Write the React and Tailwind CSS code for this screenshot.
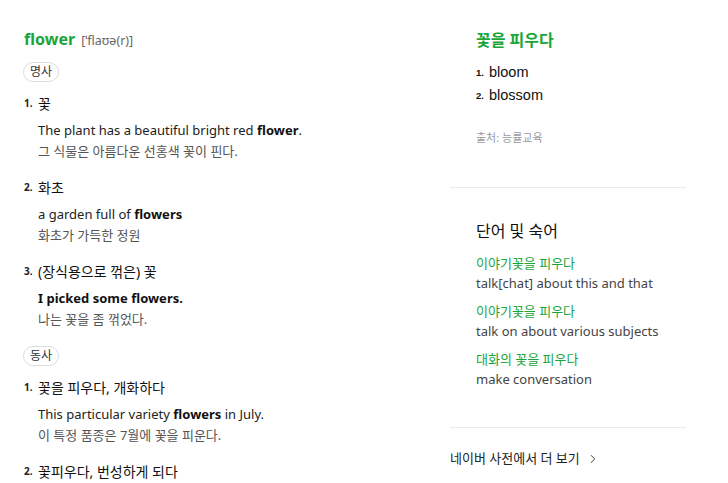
import { ChevronRight } from "lucide-react";

const GREEN = "text-[#1ba539]";

const senses = [
  {
    pos: "명사",
    items: [
      {
        meaning: "꽃",
        en: ["The plant has a beautiful bright red ", <b key="b">flower</b>, "."],
        ko: "그 식물은 아름다운 선홍색 꽃이 핀다.",
      },
      {
        meaning: "화초",
        en: ["a garden full of ", <b key="b">flowers</b>],
        ko: "화초가 가득한 정원",
      },
      {
        meaning: "(장식용으로 꺾은) 꽃",
        en: [<b key="b">I picked some flowers.</b>],
        ko: "나는 꽃을 좀 꺾었다.",
      },
    ],
  },
  {
    pos: "동사",
    items: [
      {
        meaning: "꽃을 피우다, 개화하다",
        en: ["This particular variety ", <b key="b">flowers</b>, " in July."],
        ko: "이 특정 품종은 7월에 꽃을 피운다.",
      },
      { meaning: "꽃피우다, 번성하게 되다" },
    ],
  },
];

const idioms = [
  { ko: "이야기꽃을 피우다", en: "talk[chat] about this and that" },
  { ko: "이야기꽃을 피우다", en: "talk on about various subjects" },
  { ko: "대화의 꽃을 피우다", en: "make conversation" },
];

const Pill = ({ children }) => (
  <div className="-ml-px flex h-5 w-9 items-center justify-center rounded-full border border-[#dcdde0] text-[12px] leading-none text-[#333]">
    {children}
  </div>
);

const Sense = ({ n, item, first }) => (
  <div className={first ? "mt-[11px]" : "mt-[15px]"}>
    <div className="flex h-5 items-center">
      <span className="w-[14px] text-[10px] font-bold text-[#222]">{n}.</span>
      <span className="text-[14px] text-[#111]">{item.meaning}</span>
    </div>
    {item.en && (
      <div className="mt-[7px] pl-[14px] text-[13px]">
        <div className="flex h-[21px] items-center whitespace-pre text-[#222] [&_b]:font-bold [&_b]:text-[#111]">
          {item.en}
        </div>
        <div className="flex h-[21px] items-center text-[#555]">{item.ko}</div>
      </div>
    )}
  </div>
);

export default function App() {
  return (
    <div className="flex h-[483px] w-[728px] overflow-hidden bg-white font-['Noto_Sans','Noto_Sans_CJK_KR',sans-serif]">
      <div className="w-[450px] shrink-0 pl-6 pt-[27px]">
        <div className="flex h-6 items-baseline gap-[6px]">
          <span className={`text-[16px] font-bold ${GREEN}`}>flower</span>
          <span className="text-[12.5px] text-[#666]">[ˈflaʊə(r)]</span>
        </div>
        {senses.map((s, si) => (
          <div key={s.pos} className={si === 0 ? "mt-[11px]" : "mt-4"}>
            <Pill>{s.pos}</Pill>
            {s.items.map((item, i) => (
              <Sense key={i} n={i + 1} item={item} first={i === 0} />
            ))}
          </div>
        ))}
      </div>

      <div className="w-[236px] shrink-0 pt-[28px]">
        <div className="px-[26px]">
          <div className={`text-[16px] font-semibold leading-6 ${GREEN}`}>꽃을 피우다</div>
          <ol className="mt-[9px] font-['Liberation_Sans','Noto_Sans_CJK_KR',sans-serif] text-[14.5px] leading-[23px] text-[#111]">
            <li className="flex items-center">
              <span className="w-[13px] text-[9.5px] font-bold">1.</span>bloom
            </li>
            <li className="flex items-center">
              <span className="w-[13px] text-[9.5px] font-bold">2.</span>blossom
            </li>
          </ol>
          <div className="mt-[23px] text-[11px] leading-4 text-[#999]">출처: 능률교육</div>
        </div>

        <div className="mt-[41px] border-t border-[#ebebeb]" />

        <div className="px-[26px] pt-[31px]">
          <div className="text-[16px] leading-6 text-[#111]">단어 및 숙어</div>
          <div className="mt-[10px]">
            {idioms.map((d, i) => (
              <div key={i} className={i ? "mt-2" : ""}>
                <div className={`text-[13px] leading-5 ${GREEN}`}>{d.ko}</div>
                <div className="text-[13px] leading-5 text-[#444]">{d.en}</div>
              </div>
            ))}
          </div>
        </div>

        <div className="mt-[38px] border-t border-[#ebebeb]" />

        <div className="mt-[21px] flex h-5 items-center text-[13px] text-[#222]">
          네이버 사전에서 더 보기
          <ChevronRight className="ml-[6px] h-[14px] w-[14px] text-[#222]" strokeWidth={1.5} />
        </div>
      </div>
    </div>
  );
}
